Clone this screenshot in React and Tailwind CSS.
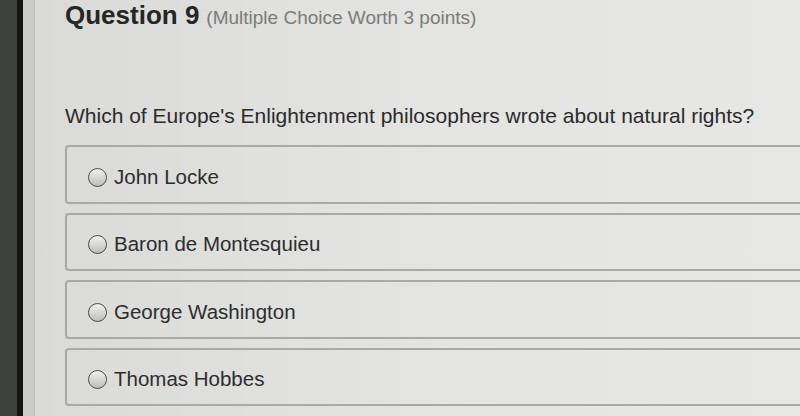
import { useState } from 'react';

const options = ['John Locke', 'Baron de Montesquieu', 'George Washington', 'Thomas Hobbes'];

function Radio({ checked }) {
  return (
    <span className="w-[19px] h-[19px] rounded-full border-[1.5px] border-[#4a4a4a] bg-gradient-to-b from-[#f2f2f2] to-[#bdbdbd] flex items-center justify-center shrink-0">
      {checked && <span className="w-[9px] h-[9px] rounded-full bg-[#333]" />}
    </span>
  );
}

export default function App() {
  const [selected, setSelected] = useState(null);

  return (
    <div className="w-[800px] h-[416px] overflow-hidden flex bg-[#e2e2e0]" style={{ fontFamily: '"Liberation Sans", Arial, sans-serif' }}>
      {/* moldura do monitor */}
      <div className="w-[17px] bg-[#3e403e] shrink-0" />
      <div className="w-[6px] bg-[#141414] shrink-0" />
      <div className="w-[12px] bg-[#cbcbca] border-r border-[#bdbdbc] shrink-0" />

      <main className="flex-1 pl-[30px] bg-gradient-to-r from-[#dadad8] via-[#e4e4e2] to-[#e7e7e5]">
        <header className="flex items-baseline gap-[7px] h-[35px]">
          <h1 className="text-[26px] font-bold text-[#262626] leading-[30px]">Question 9</h1>
          <span className="text-[19px] text-[#7b7b7b]">(Multiple Choice Worth 3 points)</span>
        </header>

        <p className="mt-[69px] text-[21px] text-[#2b2b2b] leading-[24px]">
          Which of Europe's Enlightenment philosophers wrote about natural rights?
        </p>

        <ul className="mt-[17px] flex flex-col gap-[9px] -mr-6">
          {options.map((opt, i) => (
            <li key={opt}>
              <button
                onClick={() => setSelected(i)}
                className="w-full h-[58.5px] border-2 border-[#a9a9a8] rounded-[4px] flex items-center gap-[7px] pl-[21px] pt-[6px] text-left"
              >
                <Radio checked={selected === i} />
                <span className="text-[20.5px] text-[#2d2d2d]">{opt}</span>
              </button>
            </li>
          ))}
        </ul>
      </main>
    </div>
  );
}
